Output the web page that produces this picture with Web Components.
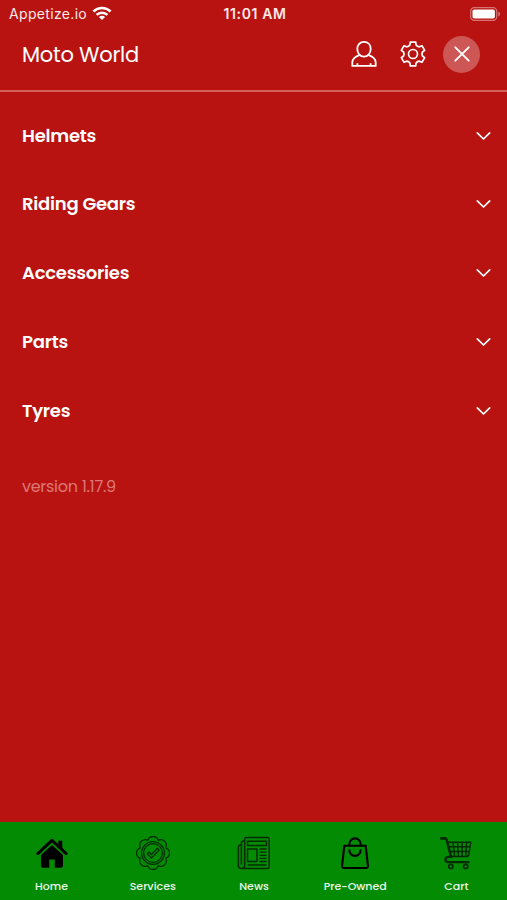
<!DOCTYPE html>
<html lang="en">
<head>
<meta charset="UTF-8">
<meta name="viewport" content="width=device-width, initial-scale=1">
<title>Moto World</title>
<style>
  body {
    margin: 0;
    background: #b81310;
    font-family: Poppins, Inter, "Open Sans", sans-serif;
  }
</style>
</head>
<body>
<moto-app></moto-app>

<script>
// closed outline that goes in and out "count" times around a centre
function wavyOutline(cx, cy, count, steps) {
  const points = [];
  for (let i = 0; i < count; i++) {
    for (const [deg, r] of steps) {
      const a = ((i * 360) / count + deg - 90) * (Math.PI / 180);
      points.push([(cx + r * Math.cos(a)).toFixed(2), (cy + r * Math.sin(a)).toFixed(2)]);
    }
  }
  return points;
}

function gearPath() {
  const p = wavyOutline(13, 13, 6, [[-13, 12.2], [13, 12.2], [18, 9.7], [30, 8.3], [42, 9.7]]);
  let d = "";
  for (let i = 0; i < p.length; i += 5) {
    d += `${i ? "L" : "M"}${p[i]} L${p[i + 1]} L${p[i + 2]} Q${p[i + 3]} ${p[i + 4]} `;
  }
  return d + "Z";
}

function rosettePath() {
  const p = wavyOutline(17, 17, 8, [[-22.5, 13.7]]);
  return `M${p[0]} ` + [...p.slice(1), p[0]].map((q) => `A5.5 5.5 0 0 1 ${q}`).join(" ") + "Z";
}

const ICONS = {
  user: `<svg width="26" height="28" viewBox="0 0 26 28" fill="none" stroke="#fff" stroke-width="1.8" stroke-linejoin="round">
    <path d="M13 1.8c4 0 6.7 3 6.7 7.2S17 16.6 13 16.6 6.3 13.2 6.3 9 9 1.8 13 1.8Z"/>
    <path d="M8.4 15.2C4 16.8 1.3 18.8 1.3 22.5v3.4h23.4v-3.4c0-3.7-2.7-5.7-7.1-7.3M6.4 23.3v2.6M19.6 23.3v2.6"/></svg>`,
  gear: `<svg width="26" height="26" viewBox="0 0 26 26" fill="none" stroke="#fff" stroke-width="1.7" stroke-linejoin="round">
    <path d="${gearPath()}"/><circle cx="13" cy="13" r="4.5"/></svg>`,
  close: `<svg width="16" height="16" viewBox="0 0 16 16" fill="none" stroke="#fff" stroke-width="1.9" stroke-linecap="round">
    <path d="M1.3 1.3l13.4 13.4M14.7 1.3L1.3 14.7"/></svg>`,
  chevron: `<svg width="16" height="10" viewBox="0 0 16 10" fill="none" stroke="#fff" stroke-width="1.7" stroke-linecap="round" stroke-linejoin="round">
    <path d="M1.3 1.8l6.2 6.2 6.2-6.2"/></svg>`,
  wifi: `<svg width="20" height="15" viewBox="0 0 20 15" fill="none" stroke="#fff" stroke-width="2.5">
    <path d="M1.4 5.5c4.8-4.6 12.4-4.6 17.2 0M4.6 8.9c3-2.9 7.8-2.9 10.8 0"/><path d="M6.9 10.9c1.8-1.5 4.4-1.5 6.2 0L10 14Z" fill="#fff" stroke="none"/></svg>`,
  battery: `<svg width="31" height="14" viewBox="0 0 31 14">
    <rect x=".7" y=".7" width="26" height="12.6" rx="3.6" fill="none" stroke="#fff" stroke-opacity=".42" stroke-width="1.2"/>
    <rect x="2.5" y="2.4" width="22.4" height="9.2" rx="1.8" fill="#fff"/><path d="M28.3 4.5c2.2.8 2.2 4.2 0 5Z" fill="#fff" fill-opacity=".45"/></svg>`,
  home: `<svg width="34" height="34" viewBox="0 0 34 34">
    <path d="M2.8 17.6L17 4.4l14.2 13.2" fill="none" stroke="#000" stroke-width="3" stroke-linecap="round" stroke-linejoin="round"/>
    <path d="M23.3 4.8h4v9l-4-3.7Z"/>
    <path d="M17 8.9L28 19v10.8q0 2-2 2h-6.3v-8.2h-5.4v8.2H8q-2 0-2-2V19Z"/></svg>`,
  services: `<svg width="34" height="34" viewBox="0 0 34 34" fill="none" stroke="#042f04" stroke-width="1.3" stroke-linejoin="round">
    <path d="${rosettePath()}"/><circle cx="17" cy="17" r="11.4"/><circle cx="17" cy="17" r="9.4"/>
    <path d="M11.2 17.7l1.8-1.7 2.4 2.5 6-6.2 1.8 1.8-7.8 7.9Z"/></svg>`,
  news: `<svg width="34" height="34" viewBox="0 0 34 34" fill="none" stroke="#042b04" stroke-width="1.5" stroke-linejoin="round">
    <path d="M7.7 3.5q0-2 2-2h20.5q2 0 2 2v27q0 2-2 2H4.4q-3 0-3-3V11q0-2 2-2h1V7q0-2 2-2h1.3M7.7 3.5v26q0 3-3.3 3M4.4 9v19.5"/>
    <rect x="10.5" y="5.2" width="19" height="4.3"/><rect x="10.5" y="13" width="9.5" height="12.5"/>
    <path d="M22.5 13h7M22.5 16.2h7M22.5 19.3h7M22.5 22.4h7M22.5 25.5h7M10.5 29h19" stroke-width="1.3"/></svg>`,
  bag: `<svg width="34" height="34" viewBox="0 0 34 34" fill="none" stroke="#000" stroke-width="2.1" stroke-linejoin="round" stroke-linecap="round">
    <path d="M6.3 9.7h21.4l2.2 20q.2 2.3-2 2.3H6.1q-2.2 0-2-2.3Z"/>
    <path d="M11.4 9.2V8a5.6 5.6 0 0 1 11.2 0v1.2M11.4 14.3a5.6 5.6 0 0 0 11.2 0"/></svg>`,
  cart: `<svg width="34" height="34" viewBox="0 0 34 34" fill="none" stroke="#042b04" stroke-linejoin="round" stroke-linecap="round">
    <path d="M2.3 2.4h3.6q1.4 0 1.8 1.4L12 20.6" stroke-width="2.6"/>
    <path d="M9.2 6.2h22.6l-2 12.3q-.4 2.1-2.5 2.1H12M14 6.2l1.6 14M18.6 6.2l.8 14M23.2 6.2v14M27.7 6.2l-1 14M10.2 10.8h20.8M11.3 15.5h19" stroke-width="1.5"/>
    <path d="M12.5 20.8H9.3q-2.9.4-2.9 2.8t2.9 2.6h20.4" stroke-width="2.3"/>
    <circle cx="11.8" cy="30.4" r="2.1" stroke-width="1.7"/><circle cx="26.7" cy="30.4" r="2.1" stroke-width="1.7"/></svg>`,
};

class AppIcon extends HTMLElement {
  constructor() {
    super();
    this.attachShadow({ mode: "open" });
  }

  connectedCallback() {
    this.shadowRoot.innerHTML = `
      <style>
        :host { display: block; flex: none; }
        svg { display: block; }
      </style>
      ${ICONS[this.getAttribute("name")] || ""}
    `;
  }
}

class StatusBar extends HTMLElement {
  constructor() {
    super();
    this.attachShadow({ mode: "open" });
  }

  connectedCallback() {
    this.shadowRoot.innerHTML = `
      <style>
        :host {
          display: grid;
          grid-template-columns: 1fr auto 1fr;
          align-items: center;
          height: 27px;
          padding: 0 6px 0 9px;
          color: #fbe9e8;
          font: 400 14px/20px Inter, sans-serif;
        }
        .carrier { display: flex; align-items: center; gap: 5px; }
        .carrier span { letter-spacing: 0.33px; }
        .time { font-weight: 600; letter-spacing: 0.6px; }
        .battery { justify-self: end; }
      </style>
      <div class="carrier"><span>Appetize.io</span><app-icon name="wifi"></app-icon></div>
      <div class="time">11:01 AM</div>
      <app-icon class="battery" name="battery"></app-icon>
    `;
  }
}

class MenuHeader extends HTMLElement {
  constructor() {
    super();
    this.attachShadow({ mode: "open" });
  }

  connectedCallback() {
    this.shadowRoot.innerHTML = `
      <style>
        :host {
          display: flex;
          align-items: center;
          box-sizing: border-box;
          height: 65px;
          padding: 0 27px 9px 22px;
          border-bottom: 2px solid #d4605d;
          color: #fff;
        }
        h1 {
          flex: 1;
          margin: 0;
          padding-top: 2px;
          font-size: 21px;
          font-weight: 400;
          letter-spacing: -0.25px;
          line-height: 30px;
        }
        .actions { display: flex; align-items: center; }
        .actions app-icon + app-icon { margin-left: 23px; }
        button {
          display: grid;
          place-items: center;
          width: 37px;
          height: 37px;
          margin: 0 0 0 17px;
          padding: 0;
          border: 0;
          border-radius: 50%;
          background: #cd5755;
        }
      </style>
      <h1><slot></slot></h1>
      <div class="actions">
        <app-icon name="user"></app-icon>
        <app-icon name="gear"></app-icon>
        <button aria-label="Close"><app-icon name="close"></app-icon></button>
      </div>
    `;
  }
}

class MenuItem extends HTMLElement {
  constructor() {
    super();
    this.attachShadow({ mode: "open" });
  }

  connectedCallback() {
    this.shadowRoot.innerHTML = `
      <style>
        :host {
          display: flex;
          align-items: center;
          justify-content: space-between;
          height: 68.8px;
          padding: 0 15px 0 22px;
          color: #fff;
          font-size: 18px;
          font-weight: 600;
          letter-spacing: -0.25px;
          line-height: 26px;
        }
      </style>
      <span><slot></slot></span>
      <app-icon name="chevron"></app-icon>
    `;
  }
}

class TabItem extends HTMLElement {
  constructor() {
    super();
    this.attachShadow({ mode: "open" });
  }

  connectedCallback() {
    this.shadowRoot.innerHTML = `
      <style>
        :host {
          display: flex;
          flex: 1;
          flex-direction: column;
          align-items: center;
          gap: 8px;
          color: #eaf6ea;
          font-size: 11px;
          font-weight: 500;
          line-height: 16px;
        }
      </style>
      <app-icon name="${this.getAttribute("icon")}"></app-icon>
      <span><slot></slot></span>
    `;
  }
}

class MotoApp extends HTMLElement {
  constructor() {
    super();
    this.attachShadow({ mode: "open" });
  }

  connectedCallback() {
    this.shadowRoot.innerHTML = `
      <style>
        :host { display: flex; flex-direction: column; height: 900px; overflow: hidden; }
        main { flex: 1; padding-top: 9.2px; }
        .version {
          margin: 30px 0 0 22px;
          color: #dd7876;
          font-size: 16px;
          letter-spacing: -0.28px;
          line-height: 24px;
        }
        nav {
          display: flex;
          box-sizing: border-box;
          height: 78px;
          padding: 14px 0 0 1px;
          background: #048b04;
        }
      </style>
      <status-bar></status-bar>
      <menu-header>Moto World</menu-header>
      <main>
        <menu-item>Helmets</menu-item>
        <menu-item>Riding Gears</menu-item>
        <menu-item>Accessories</menu-item>
        <menu-item>Parts</menu-item>
        <menu-item>Tyres</menu-item>
        <p class="version">version 1.17.9</p>
      </main>
      <nav>
        <tab-item icon="home">Home</tab-item>
        <tab-item icon="services">Services</tab-item>
        <tab-item icon="news">News</tab-item>
        <tab-item icon="bag">Pre-Owned</tab-item>
        <tab-item icon="cart">Cart</tab-item>
      </nav>
    `;
  }
}

customElements.define("app-icon", AppIcon);
customElements.define("status-bar", StatusBar);
customElements.define("menu-header", MenuHeader);
customElements.define("menu-item", MenuItem);
customElements.define("tab-item", TabItem);
customElements.define("moto-app", MotoApp);
</script>
</body>
</html>
